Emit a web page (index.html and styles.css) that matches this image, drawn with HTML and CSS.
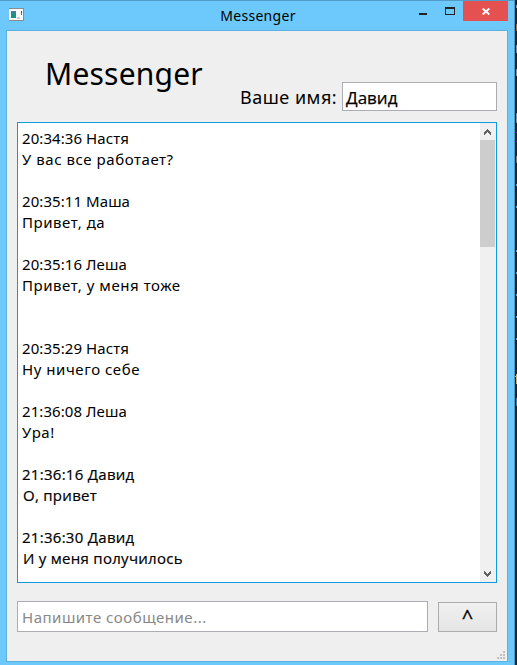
FILE: index.html
```
<!DOCTYPE html>
<html lang="ru">
<head>
<meta charset="utf-8">
<title>Messenger</title>
<link rel="stylesheet" href="styles.css">
</head>
<body>
<div class="window">
  <header class="titlebar">
    <svg class="app-icon" width="16" height="14" viewBox="0 0 16 14" shape-rendering="crispEdges">
      <rect x="0" y="0" width="15" height="13" fill="#8b8b8b"/>
      <rect x="0" y="1" width="14" height="11" fill="#fafafa"/>
      <rect x="2" y="3" width="5" height="7" fill="#169486"/>
      <rect x="2" y="3" width="5" height="2" fill="#477f9d"/>
      <rect x="8" y="9" width="3" height="2" fill="#cfcfcf"/>
      <rect x="12" y="3" width="1" height="2" fill="#244b78"/>
      <rect x="12" y="5" width="1" height="2" fill="#249a80"/>
    </svg>
    <span class="caption">Messenger</span>
    <div class="controls">
      <svg class="control" width="28" height="20" viewBox="0 0 28 20" shape-rendering="crispEdges"><rect x="11" y="13" width="8" height="2" fill="#222"/></svg>
      <svg class="control" width="28" height="20" viewBox="0 0 28 20" shape-rendering="crispEdges"><path d="M10 7h10v8H10zM11 9v5h8V9z" fill="#222" fill-rule="evenodd"/></svg>
      <svg class="close" width="45" height="20" viewBox="0 0 45 20"><path d="M19.7 7.5l6.6 6M26.3 7.5l-6.6 6" stroke="#fff" stroke-width="1.8"/></svg>
    </div>
  </header>
  <main class="client">
    <div class="top">
      <h1 class="title">Messenger</h1>
      <span class="label">Ваше имя:</span>
      <div class="field name"><span>Давид</span></div>
    </div>
    <div class="chat">
      <div class="messages">
        <div class="message"><p class="head">20:34:36 Настя</p><p class="text">У вас все работает?</p></div>
        <div class="message"><p class="head">20:35:11 Маша</p><p class="text">Привет, да</p></div>
        <div class="message multiline"><p class="head">20:35:16 Леша</p><p class="text">Привет, у меня тоже</p></div>
        <div class="message"><p class="head">20:35:29 Настя</p><p class="text">Ну ничего себе</p></div>
        <div class="message"><p class="head">21:36:08 Леша</p><p class="text">Ура!</p></div>
        <div class="message own"><p class="head">21:36:16 Давид</p><p class="text">О, привет</p></div>
        <div class="message own"><p class="head">21:36:30 Давид</p><p class="text">И у меня получилось</p></div>
      </div>
      <div class="scrollbar">
        <svg class="arrow" width="15" height="17" viewBox="0 0 15 17" shape-rendering="crispEdges"><path d="M7 6h1v1h1v1h1v1h1v3h-1v-1h-1v-1h-1v-1h-1v1h-1v1h-1v1h-1v-3h1v-1h1v-1h1z" fill="#606060"/></svg>
        <div class="thumb"></div>
        <svg class="arrow down" width="15" height="17" viewBox="0 0 15 17" shape-rendering="crispEdges"><path d="M4 6h1v1h1v1h1v1h1v-1h1v-1h1v-1h1v3h-1v1h-1v1h-1v1h-1v-1h-1v-1h-1v-1h-1z" fill="#606060"/></svg>
      </div>
    </div>
    <div class="compose">
      <div class="field draft"><span>Напишите сообщение...</span></div>
      <button class="send">^</button>
    </div>
    <svg class="grip" width="8" height="8" viewBox="0 0 8 8" shape-rendering="crispEdges"><path d="M6 0h2v2H6zM3 3h2v2H3zM6 3h2v2H6zM0 6h2v2H0zM3 6h2v2H3zM6 6h2v2H6z" fill="#bfbfbf"/></svg>
  </main>
</div>
<svg class="desktop" width="2" height="665" viewBox="0 0 2 665" shape-rendering="crispEdges">
  <rect width="2" height="665" fill="#1e1f22"/>
  <path d="M1 5h1v3H1zM1 45h1v8H1zM1 69h1v7H1zM1 113h1v10H1z" fill="#7c929c"/>
  <path d="M1 24h1v7H1z" fill="#a9632f"/>
  <path d="M1 132h1v1H1zM1 141h1v1H1z" fill="#c800c8"/>
  <path d="M1 156h1v7H1z" fill="#846a6a"/>
  <path d="M1 184h1v2H1zM1 206h1v2H1zM1 250h1v2H1zM1 272h1v2H1zM1 294h1v2H1zM1 316h1v2H1zM1 338h1v2H1z" fill="#5ba3c5"/>
  <path d="M0 376h1v1H0zM1 374h1v10H1z" fill="#e5b04b"/>
  <path d="M1 398h1v8H1z" fill="#477b9b"/>
</svg>
</body>
</html>
```
FILE: styles.css
```
* { box-sizing: border-box; margin: 0; padding: 0; }
body {
  display: flex;
  width: 517px;
  height: 665px;
  overflow: hidden;
  font-family: "Noto Sans", sans-serif;
  font-size: 15px;
  color: #000;
}
.window {
  display: flex;
  flex-direction: column;
  width: 515px;
  height: 665px;
  padding: 0 6px 3px;
  background: #6dc9fb;
  border-top: 1px solid #519bc8;
  border-right: 1px solid #4a98c7;
}
.titlebar {
  display: grid;
  grid-template-columns: 100px 1fr 100px;
  width: 502px;
  height: 29px;
}
.app-icon { margin: 7px 0 0 3px; }
.caption {
  justify-self: center;
  margin-left: 2px;
  font-size: 14px;
  line-height: 29px;
  letter-spacing: .3px;
}
.controls { display: flex; }
.control { margin-top: -1px; }
.controls .control:nth-child(2) { margin-left: -1px; }
.close { background: #e55050; }
.client {
  display: flex;
  flex-direction: column;
  flex: none;
  width: 502px;
  height: 632px;
  padding: 0 10px;
  background: #efefef;
  border: 1px solid #5db1de;
}
.top { display: flex; flex: none; height: 91px; }
.title {
  width: 223px;
  padding: 22px 0 0 28px;
  font-size: 30px;
  font-weight: 400;
  line-height: 42px;
  letter-spacing: .2px;
  white-space: nowrap;
}
.label {
  width: 102px;
  padding-top: 53px;
  font-size: 18px;
  line-height: 26px;
  letter-spacing: .5px;
  white-space: nowrap;
}
.field {
  display: flex;
  align-items: center;
  background: #fff;
  border: 1px solid #abadb3;
  white-space: nowrap;
}
.name {
  width: 155px;
  height: 29px;
  margin-top: 51px;
  padding: 1px 0 0 3px;
  font: 17px "Open Sans", "Noto Sans", sans-serif;
  -webkit-text-stroke: .25px #000;
}
.chat {
  display: flex;
  flex: none;
  width: 480px;
  height: 461px;
  background: #fff;
  border: 1px solid #0c9be2;
}
.messages { flex: 1; padding: 5px 0 0 4px; line-height: 21px; white-space: nowrap; }
.message { height: 63px; }
.head { letter-spacing: .07px; }
.text { letter-spacing: .55px; }
.multiline { height: 84px; }
.own { font-family: "Open Sans", "Noto Sans", sans-serif; -webkit-text-stroke: .2px #000; }
.own .head { letter-spacing: .28px; }
.own .text { padding-left: 1px; letter-spacing: .28px; }
.scrollbar { display: flex; flex-direction: column; width: 16px; padding-right: 1px; background: #f0f0f0; }
.arrow { flex: none; }
.thumb { flex: none; height: 107px; background: #cdcdcd; }
.down { margin-top: auto; }
.compose { display: flex; flex: none; gap: 10px; margin-top: 18px; }
.draft { width: 411px; height: 31px; padding: 1px 0 0 4px; color: #888; letter-spacing: .5px; }
.send {
  width: 59px;
  height: 30px;
  margin-top: 1px;
  font: 20px "Open Sans", sans-serif;
  line-height: 28px;
  color: #000;
  background: linear-gradient(#f0f0f0, #e5e5e5);
  border: 1px solid #acacac;
  -webkit-text-stroke: .3px #000;
}
.grip { align-self: flex-end; margin: 19px -8px 0 0; }
.desktop { flex: none; }
```
